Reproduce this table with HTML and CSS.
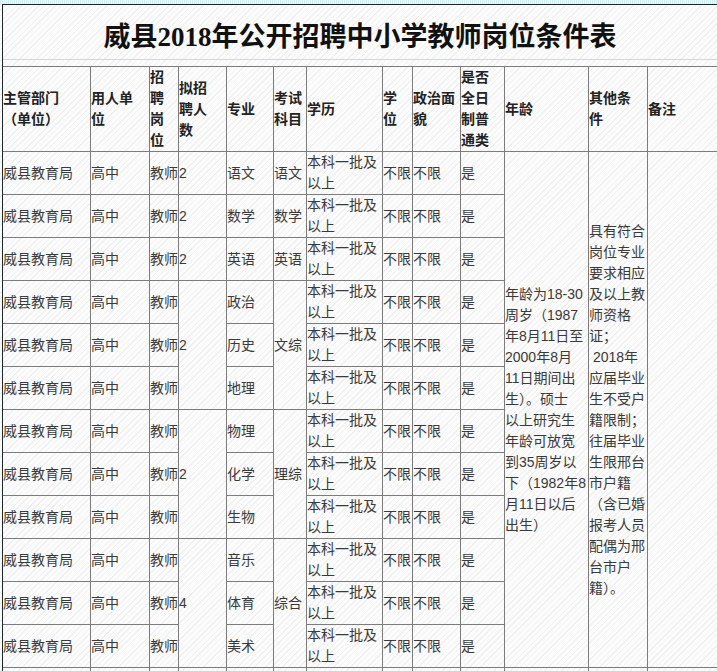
FILE: index.html
```html
<!DOCTYPE html>
<html lang="zh-CN">
<head>
<meta charset="utf-8">
<title>威县2018年公开招聘中小学教师岗位条件表</title>
<link rel="stylesheet" href="styles.css">
</head>
<body>
<div class="topband"></div>
<div class="frame">
  <h1 class="title">威县2018年公开招聘中小学教师岗位条件表</h1>
  <table class="grid">
    <thead>
      <tr class="head">
        <th class="c1">主管部门<br>（单位）</th>
        <th class="c2">用人单<br>位</th>
        <th class="c3">招<br>聘<br>岗<br>位</th>
        <th class="c4">拟招<br>聘人<br>数</th>
        <th class="c5">专业</th>
        <th class="c6">考试<br>科目</th>
        <th class="c7">学历</th>
        <th class="c8">学<br>位</th>
        <th class="c9">政治面<br>貌</th>
        <th class="c10">是否<br>全日<br>制普<br>通类</th>
        <th class="c11">年龄</th>
        <th class="c12">其他条<br>件</th>
        <th class="c13">备注</th>
      </tr>
    </thead>
    <tbody>
      <tr class="row">
        <td>威县教育局</td><td>高中</td><td>教师</td><td>2</td><td>语文</td><td>语文</td>
        <td>本科一批及<br>以上</td><td>不限</td><td>不限</td><td>是</td>
        <td rowspan="12" class="long">年龄为18-30<br>周岁（1987<br>年8月11日至<br>2000年8月<br>11日期间出<br>生）。硕士<br>以上研究生<br>年龄可放宽<br>到35周岁以<br>下（1982年8<br>月11日以后<br>出生）</td>
        <td rowspan="12" class="long">具有符合<br>岗位专业<br>要求相应<br>及以上教<br>师资格<br>证；<br>&nbsp;2018年<br>应届毕业<br>生不受户<br>籍限制；<br>往届毕业<br>生限邢台<br>市户籍<br>（含已婚<br>报考人员<br>配偶为邢<br>台市户<br>籍）。</td>
        <td rowspan="12"></td>
      </tr>
      <tr class="row">
        <td>威县教育局</td><td>高中</td><td>教师</td><td>2</td><td>数学</td><td>数学</td>
        <td>本科一批及<br>以上</td><td>不限</td><td>不限</td><td>是</td>
      </tr>
      <tr class="row">
        <td>威县教育局</td><td>高中</td><td>教师</td><td>2</td><td>英语</td><td>英语</td>
        <td>本科一批及<br>以上</td><td>不限</td><td>不限</td><td>是</td>
      </tr>
      <tr class="row">
        <td>威县教育局</td><td>高中</td><td>教师</td><td rowspan="3">2</td><td>政治</td><td rowspan="3">文综</td>
        <td>本科一批及<br>以上</td><td>不限</td><td>不限</td><td>是</td>
      </tr>
      <tr class="row">
        <td>威县教育局</td><td>高中</td><td>教师</td><td>历史</td>
        <td>本科一批及<br>以上</td><td>不限</td><td>不限</td><td>是</td>
      </tr>
      <tr class="row">
        <td>威县教育局</td><td>高中</td><td>教师</td><td>地理</td>
        <td>本科一批及<br>以上</td><td>不限</td><td>不限</td><td>是</td>
      </tr>
      <tr class="row">
        <td>威县教育局</td><td>高中</td><td>教师</td><td rowspan="3">2</td><td>物理</td><td rowspan="3">理综</td>
        <td>本科一批及<br>以上</td><td>不限</td><td>不限</td><td>是</td>
      </tr>
      <tr class="row">
        <td>威县教育局</td><td>高中</td><td>教师</td><td>化学</td>
        <td>本科一批及<br>以上</td><td>不限</td><td>不限</td><td>是</td>
      </tr>
      <tr class="row">
        <td>威县教育局</td><td>高中</td><td>教师</td><td>生物</td>
        <td>本科一批及<br>以上</td><td>不限</td><td>不限</td><td>是</td>
      </tr>
      <tr class="row">
        <td>威县教育局</td><td>高中</td><td>教师</td><td rowspan="3">4</td><td>音乐</td><td rowspan="3">综合</td>
        <td>本科一批及<br>以上</td><td>不限</td><td>不限</td><td>是</td>
      </tr>
      <tr class="row">
        <td>威县教育局</td><td>高中</td><td>教师</td><td>体育</td>
        <td>本科一批及<br>以上</td><td>不限</td><td>不限</td><td>是</td>
      </tr>
      <tr class="row">
        <td>威县教育局</td><td>高中</td><td>教师</td><td>美术</td>
        <td>本科一批及<br>以上</td><td>不限</td><td>不限</td><td>是</td>
      </tr>
      <tr class="row">
        <td></td><td></td><td></td><td></td><td></td><td></td>
        <td></td><td></td><td></td><td></td>
        <td></td><td></td><td></td>
      </tr>
    </tbody>
  </table>
</div>
</body>
</html>
```
FILE: styles.css
```css
html {
  overflow: hidden;
}

body {
  margin: 0;
  background-color: #fafafa;
  background-image: repeating-linear-gradient(135deg, #fcfcfc 0 3px, #f0f0f0 3px 4px);
  font-family: "Liberation Sans", "Noto Sans CJK SC", sans-serif;
  font-size: 14px;
  color: #3a3a3a;
}

.topband {
  height: 4px;
  background-color: #e6f6f6;
  background-image: repeating-linear-gradient(90deg, #d2eeee 0 1px, #f2fbfb 1px 2px);
}

.frame {
  margin-left: 2px;
  border-left: 1px solid #1d2929;
  border-top: 1px solid #1d2929;
}

.title {
  margin: 0 0 6px 0;
  height: 44px;
  padding: 10px 0 0 0;
  box-sizing: content-box;
  border-bottom: 1px solid #d6d6d6;
  text-align: center;
  font-family: "Liberation Serif", "Noto Sans CJK SC", serif;
  font-size: 27px;
  font-weight: bold;
  line-height: 44px;
  color: #111;
}

.grid {
  border-collapse: separate;
  border-spacing: 0;
  table-layout: fixed;
  width: 725px;
  border-top: 1px solid #7c7c7c;
}

.grid th,
.grid td {
  box-sizing: border-box;
  padding: 0;
  border-right: 1px solid #7c7c7c;
  border-bottom: 1px solid #7c7c7c;
  text-align: left;
  vertical-align: middle;
  line-height: 21px;
  white-space: nowrap;
  overflow: hidden;
}

.grid th {
  font-weight: bold;
  color: #222;
}

.head {
  height: 85px;
}

.row {
  height: 43px;
}

.c1 { width: 88px; }
.c2 { width: 59px; }
.c3 { width: 29px; }
.c4 { width: 48px; }
.c5 { width: 47px; }
.c6 { width: 33px; }
.c7 { width: 76px; }
.c8 { width: 30px; }
.c9 { width: 48px; }
.c10 { width: 44px; }
.c11 { width: 84px; }
.c12 { width: 59px; }
.c13 { width: 80px; }

.long {
  line-height: 21.4px;
}
```
